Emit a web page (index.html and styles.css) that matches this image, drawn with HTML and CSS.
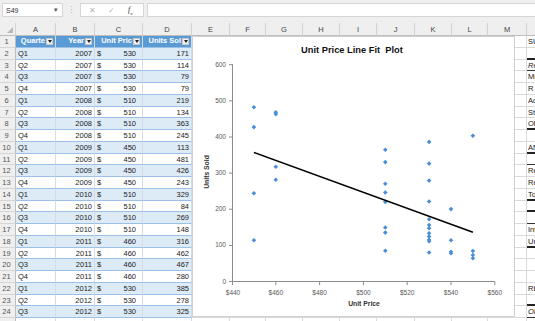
FILE: index.html
```html
<!DOCTYPE html>
<html lang="en">
<head>
    <meta charset="utf-8">
    <title>Unit Price Regression</title>
    <link rel="stylesheet" href="styles.css">
</head>
<body>
    <div class="formula-bar">
        <div class="name-box">S49<span class="caret">&#9662;</span></div>
        <div class="grip">&#8942;</div>
        <div class="fx-box">
            <span class="cancel">&#10005;</span>
            <span class="enter">&#10003;</span>
            <span class="fx">f<sub>x</sub></span>
        </div>
        <div class="formula-input"></div>
    </div>

    <div class="sheet">
        <div class="row col-head"><span class="corner"></span><span>A</span><span>B</span><span>C</span><span>D</span><span>E</span><span>F</span><span>G</span><span>H</span><span>I</span><span>J</span><span>K</span><span>L</span><span>M</span><span></span></div>
        <div class="row data head"><span class="rh">1</span><span>Quarte<i class="filter"></i></span><span>Year<i class="filter"></i></span><span>Unit Pric<i class="filter"></i></span><span>Units Sol<i class="filter"></i></span><span></span><span></span><span></span><span></span><span></span><span></span><span></span><span></span><span></span><span>SUMMARY OUTPUT</span></div>
        <div class="row data band"><span class="rh">2</span><span>Q1</span><span class="num">2007</span><span class="cur">530</span><span class="num">171</span><span></span><span></span><span></span><span></span><span></span><span></span><span></span><span></span><span></span><span class="thick"></span></div>
        <div class="row data"><span class="rh">3</span><span>Q2</span><span class="num">2007</span><span class="cur">530</span><span class="num">114</span><span></span><span></span><span></span><span></span><span></span><span></span><span></span><span></span><span></span><span class="thin it">Regression Statistics</span></div>
        <div class="row data band"><span class="rh">4</span><span>Q3</span><span class="num">2007</span><span class="cur">530</span><span class="num">79</span><span></span><span></span><span></span><span></span><span></span><span></span><span></span><span></span><span></span><span>Multiple R</span></div>
        <div class="row data"><span class="rh">5</span><span>Q4</span><span class="num">2007</span><span class="cur">530</span><span class="num">79</span><span></span><span></span><span></span><span></span><span></span><span></span><span></span><span></span><span></span><span>R Square</span></div>
        <div class="row data band"><span class="rh">6</span><span>Q1</span><span class="num">2008</span><span class="cur">510</span><span class="num">219</span><span></span><span></span><span></span><span></span><span></span><span></span><span></span><span></span><span></span><span>Adjusted R Square</span></div>
        <div class="row data"><span class="rh">7</span><span>Q2</span><span class="num">2008</span><span class="cur">510</span><span class="num">134</span><span></span><span></span><span></span><span></span><span></span><span></span><span></span><span></span><span></span><span>Standard Error</span></div>
        <div class="row data band"><span class="rh">8</span><span>Q3</span><span class="num">2008</span><span class="cur">510</span><span class="num">363</span><span></span><span></span><span></span><span></span><span></span><span></span><span></span><span></span><span></span><span class="thick">Observations</span></div>
        <div class="row data"><span class="rh">9</span><span>Q4</span><span class="num">2008</span><span class="cur">510</span><span class="num">245</span><span></span><span></span><span></span><span></span><span></span><span></span><span></span><span></span><span></span><span></span></div>
        <div class="row data band"><span class="rh">10</span><span>Q1</span><span class="num">2009</span><span class="cur">450</span><span class="num">113</span><span></span><span></span><span></span><span></span><span></span><span></span><span></span><span></span><span></span><span class="thick">ANOVA</span></div>
        <div class="row data"><span class="rh">11</span><span>Q2</span><span class="num">2009</span><span class="cur">450</span><span class="num">481</span><span></span><span></span><span></span><span></span><span></span><span></span><span></span><span></span><span></span><span class="thin"></span></div>
        <div class="row data band"><span class="rh">12</span><span>Q3</span><span class="num">2009</span><span class="cur">450</span><span class="num">426</span><span></span><span></span><span></span><span></span><span></span><span></span><span></span><span></span><span></span><span>Regression</span></div>
        <div class="row data"><span class="rh">13</span><span>Q4</span><span class="num">2009</span><span class="cur">450</span><span class="num">243</span><span></span><span></span><span></span><span></span><span></span><span></span><span></span><span></span><span></span><span>Residual</span></div>
        <div class="row data band"><span class="rh">14</span><span>Q1</span><span class="num">2010</span><span class="cur">510</span><span class="num">329</span><span></span><span></span><span></span><span></span><span></span><span></span><span></span><span></span><span></span><span class="thick">Total</span></div>
        <div class="row data"><span class="rh">15</span><span>Q2</span><span class="num">2010</span><span class="cur">510</span><span class="num">84</span><span></span><span></span><span></span><span></span><span></span><span></span><span></span><span></span><span></span><span class="thick"></span></div>
        <div class="row data band"><span class="rh">16</span><span>Q3</span><span class="num">2010</span><span class="cur">510</span><span class="num">269</span><span></span><span></span><span></span><span></span><span></span><span></span><span></span><span></span><span></span><span class="thin"></span></div>
        <div class="row data"><span class="rh">17</span><span>Q4</span><span class="num">2010</span><span class="cur">510</span><span class="num">148</span><span></span><span></span><span></span><span></span><span></span><span></span><span></span><span></span><span></span><span>Intercept</span></div>
        <div class="row data band"><span class="rh">18</span><span>Q1</span><span class="num">2011</span><span class="cur">460</span><span class="num">316</span><span></span><span></span><span></span><span></span><span></span><span></span><span></span><span></span><span></span><span class="thick">Unit Price</span></div>
        <div class="row data"><span class="rh">19</span><span>Q2</span><span class="num">2011</span><span class="cur">460</span><span class="num">462</span><span></span><span></span><span></span><span></span><span></span><span></span><span></span><span></span><span></span><span></span></div>
        <div class="row data band"><span class="rh">20</span><span>Q3</span><span class="num">2011</span><span class="cur">460</span><span class="num">467</span><span></span><span></span><span></span><span></span><span></span><span></span><span></span><span></span><span></span><span></span></div>
        <div class="row data"><span class="rh">21</span><span>Q4</span><span class="num">2011</span><span class="cur">460</span><span class="num">280</span><span></span><span></span><span></span><span></span><span></span><span></span><span></span><span></span><span></span><span></span></div>
        <div class="row data band"><span class="rh">22</span><span>Q1</span><span class="num">2012</span><span class="cur">530</span><span class="num">385</span><span></span><span></span><span></span><span></span><span></span><span></span><span></span><span></span><span></span><span>RESIDUAL OUTPUT</span></div>
        <div class="row data"><span class="rh">23</span><span>Q2</span><span class="num">2012</span><span class="cur">530</span><span class="num">278</span><span></span><span></span><span></span><span></span><span></span><span></span><span></span><span></span><span></span><span class="thick"></span></div>
        <div class="row data band"><span class="rh">24</span><span>Q3</span><span class="num">2012</span><span class="cur">530</span><span class="num">325</span><span></span><span></span><span></span><span></span><span></span><span></span><span></span><span></span><span></span><span class="thin it">Observation</span></div>
        <div class="row data"><span class="rh">25</span><span></span><span></span><span></span><span></span><span></span><span></span><span></span><span></span><span></span><span></span><span></span><span></span><span></span><span></span></div>

        <div class="chart">
            <svg width="321" height="279" viewBox="0 0 321 279">
                <defs>
                    <path id="pt" d="M0 -2.3L2.3 0L0 2.3L-2.3 0Z" fill="#4a8ed6"/>
                </defs>
                <text class="title" x="159" y="15.6">Unit Price Line Fit  Plot</text>

                <path class="axis" d="M39.5 27.2V244.5H301.8
                    M36 244.5H39.5M36 208.4H39.5M36 172.2H39.5M36 136.1H39.5M36 100H39.5M36 63.9H39.5M36 27.7H39.5
                    M39.5 244.5V248M82.8 244.5V248M126.6 244.5V248M170.4 244.5V248M214.2 244.5V248M258 244.5V248M301.8 244.5V248"/>

                <g class="tick-y">
                    <text x="33" y="246.5">0</text>
                    <text x="33" y="210.4">100</text>
                    <text x="33" y="174.2">200</text>
                    <text x="33" y="138.1">300</text>
                    <text x="33" y="102">400</text>
                    <text x="33" y="65.9">500</text>
                    <text x="33" y="29.7">600</text>
                </g>
                <g class="tick-x">
                    <text x="40" y="257.5">$440</text>
                    <text x="82.8" y="257.5">$460</text>
                    <text x="126.6" y="257.5">$480</text>
                    <text x="170.4" y="257.5">$500</text>
                    <text x="214.2" y="257.5">$520</text>
                    <text x="258" y="257.5">$540</text>
                    <text x="301.8" y="257.5">$560</text>
                </g>

                <text class="axis-title" transform="translate(15.5 135) rotate(-90)">Units Sold</text>
                <text class="axis-title" x="171" y="268.5">Unit Price</text>

                <g>
                    <use href="#pt" x="60.9" y="203.2"/>
                    <use href="#pt" x="60.9" y="70.2"/>
                    <use href="#pt" x="60.9" y="90.1"/>
                    <use href="#pt" x="60.9" y="156.2"/>
                    <use href="#pt" x="82.8" y="129.8"/>
                    <use href="#pt" x="82.8" y="77.1"/>
                    <use href="#pt" x="82.8" y="75.3"/>
                    <use href="#pt" x="82.8" y="142.8"/>
                    <use href="#pt" x="192.3" y="164.9"/>
                    <use href="#pt" x="192.3" y="195.6"/>
                    <use href="#pt" x="192.3" y="112.8"/>
                    <use href="#pt" x="192.3" y="155.5"/>
                    <use href="#pt" x="192.3" y="125.1"/>
                    <use href="#pt" x="192.3" y="213.7"/>
                    <use href="#pt" x="192.3" y="146.8"/>
                    <use href="#pt" x="192.3" y="190.5"/>
                    <use href="#pt" x="236.1" y="104.9"/>
                    <use href="#pt" x="236.1" y="126.6"/>
                    <use href="#pt" x="236.1" y="143.6"/>
                    <use href="#pt" x="236.1" y="164.5"/>
                    <use href="#pt" x="236.1" y="182.2"/>
                    <use href="#pt" x="236.1" y="188"/>
                    <use href="#pt" x="236.1" y="191.3"/>
                    <use href="#pt" x="236.1" y="196.3"/>
                    <use href="#pt" x="236.1" y="199.6"/>
                    <use href="#pt" x="236.1" y="202.8"/>
                    <use href="#pt" x="236.1" y="204.3"/>
                    <use href="#pt" x="236.1" y="215.5"/>
                    <use href="#pt" x="258" y="172.1"/>
                    <use href="#pt" x="258" y="203.2"/>
                    <use href="#pt" x="258" y="214.7"/>
                    <use href="#pt" x="258" y="216.2"/>
                    <use href="#pt" x="279.9" y="98.8"/>
                    <use href="#pt" x="279.9" y="214"/>
                    <use href="#pt" x="279.9" y="218"/>
                    <use href="#pt" x="279.9" y="221.2"/>
                </g>

                <path class="fit" d="M60.9 115.4L279.9 195.2"/>
            </svg>
        </div>
    </div>
</body>
</html>
```

FILE: styles.css
```css
* {
    box-sizing: border-box;
}
body {
    width: 535px;
    height: 321px;
    margin: 0;
    overflow: hidden;
    background: #fff;
    color: #222;
    font-family: "Liberation Sans", Arial, sans-serif;
    font-size: 7.5px;
}

/* formula bar */
.formula-bar {
    display: flex;
    height: 23px;
    padding: 3px 0 6px 2px;
    background: #efefef;
}
.name-box {
    width: 61px;
    display: flex;
    align-items: center;
    justify-content: space-between;
    padding: 0 4px 0 3px;
    background: #fff;
    border: 1px solid #d6d6d6;
    font-size: 7px;
    color: #333;
}
.caret {
    font-size: 7px;
    color: #555;
}
.grip {
    width: 17px;
    display: flex;
    align-items: center;
    justify-content: center;
    color: #b4b4b4;
    font-size: 9px;
}
.fx-box {
    width: 64px;
    display: flex;
    align-items: center;
    padding-left: 8px;
    background: #fff;
    border: 1px solid #d6d6d6;
    color: #b4b4b4;
    font-size: 8px;
}
.enter {
    margin-left: 12px;
}
.fx {
    margin-left: 13px;
    color: #333;
    font-family: "Liberation Serif", serif;
    font-style: italic;
    font-size: 8px;
}
.fx sub {
    font-size: 5px;
}
.formula-input {
    flex: 1;
    margin-left: 3px;
    background: #fff;
    border: 1px solid #d6d6d6;
    border-right: none;
}

/* grid */
.sheet {
    position: relative;
}
.row {
    display: grid;
    grid-template-columns: 16px 40px 39px 48px 49px 38px 36px 37px 37px 37px 38px 37px 36px 39px 100px;
    height: 11.75px;
}
.row > span {
    display: block;
    overflow: hidden;
    white-space: nowrap;
    line-height: 12px;
    padding: 0 2px;
    border-right: 1px solid #dadada;
    border-bottom: 1px solid #dadada;
}
.row > span:last-child {
    padding-left: 1px;
    color: #1a1a1a;
}
.col-head {
    height: 13px;
    background: #efefef;
}
.col-head > span {
    line-height: 13px;
    text-align: center;
    color: #444;
    border-right-color: #d2d2d2;
    border-bottom-color: #bdbdbd;
}
.corner {
    position: relative;
}
.corner::after {
    content: "";
    position: absolute;
    right: 2px;
    bottom: 2px;
    border-left: 6px solid transparent;
    border-bottom: 6px solid #b8b8b8;
}
.row > .rh {
    padding: 0 2px 0 0;
    text-align: center;
    background: #efefef;
    color: #555;
    border-right-color: #bdbdbd;
    border-bottom-color: #d6d6d6;
}

/* excel table A:D */
.data > span:nth-child(n+2):nth-child(-n+5) {
    border-bottom-color: #9bc2e6;
    border-right-color: #d2dbe6;
}
.band > span:nth-child(n+2):nth-child(-n+5) {
    background: #ddebf7;
}
.head > span:nth-child(n+2):nth-child(-n+5) {
    display: flex;
    align-items: center;
    justify-content: flex-end;
    gap: 1px;
    padding-right: 2px;
    background: #5b9bd5;
    color: #fff;
    font-weight: bold;
}
.filter {
    flex: none;
    width: 7px;
    height: 7px;
    display: flex;
    align-items: center;
    justify-content: center;
    background: #f2f2f2;
    border: 1px solid #c8c8c8;
}
.filter::after {
    content: "";
    border-top: 3px solid #222;
    border-left: 2px solid transparent;
    border-right: 2px solid transparent;
}
.num {
    text-align: right;
}
.row > .cur {
    display: flex;
    justify-content: space-between;
    padding-right: 6px;
}
.cur::before {
    content: "$";
}

/* regression output borders */
.row > .thick {
    border-bottom: 2px solid #222;
}
.row > .thin {
    border-bottom: 1px solid #333;
}
.it {
    font-style: italic;
}

/* chart */
.chart {
    position: absolute;
    left: 192px;
    top: 13px;
    width: 323px;
    height: 281px;
    background: #fff;
    border: 1px solid #d0d0d0;
}
.chart svg {
    display: block;
    font-family: "Liberation Sans", Arial, sans-serif;
}
.title {
    font-size: 9.3px;
    font-weight: bold;
    fill: #111;
    text-anchor: middle;
    white-space: pre;
}
.axis {
    fill: none;
    stroke: #8c8c8c;
    stroke-width: 1;
}
.tick-y text,
.tick-x text {
    font-size: 6.5px;
    fill: #595959;
}
.tick-y text {
    text-anchor: end;
}
.tick-x text {
    text-anchor: middle;
}
.axis-title {
    font-size: 6.8px;
    font-weight: bold;
    fill: #333;
    text-anchor: middle;
}
.fit {
    fill: none;
    stroke: #000;
    stroke-width: 1.6;
}
```
